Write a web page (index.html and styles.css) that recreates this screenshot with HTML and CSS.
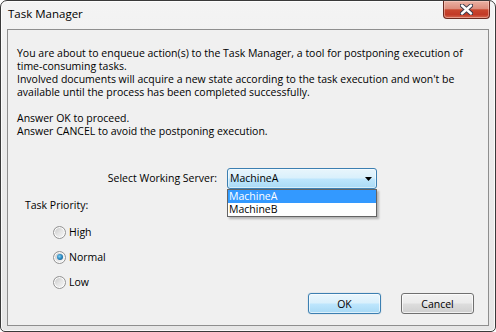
FILE: index.html
```html
<!DOCTYPE html>
<html>
<head>
<meta charset="utf-8">
<title>Task Manager</title>
<link rel="stylesheet" href="styles.css">
</head>
<body>
<div class="window">
  <div class="titlebar">
    <span class="title">Task Manager</span>
    <div class="close">
      <svg width="13" height="11" viewBox="0 0 13 11">
        <path d="M2 1.5 L11 9.5 M11 1.5 L2 9.5" stroke="#3a3a4a" stroke-width="4.4" stroke-linecap="round"/>
        <path d="M2 1.5 L11 9.5 M11 1.5 L2 9.5" stroke="#ffffff" stroke-width="2.4" stroke-linecap="round"/>
      </svg>
    </div>
  </div>
  <div class="panel">
    <div class="message">
      <p>You are about to enqueue action(s) to the Task Manager, a tool for postponing execution of<br>time-consuming tasks.<br>Involved documents will acquire a new state according to the task execution and won't be<br>available until the process has been completed successfully.</p>
      <p>Answer OK to proceed.<br>Answer CANCEL to avoid the postponing execution.</p>
    </div>
    <div class="server-row">
      <span class="server-label">Select Working Server:</span>
      <div class="combo">
        <div class="combo-box">
          <span>MachineA</span>
          <svg class="arrow" width="7" height="4" viewBox="0 0 7 4"><polygon points="0,0 7,0 3.5,4" fill="#000"/></svg>
        </div>
        <ul class="dropdown">
          <li class="selected">MachineA</li>
          <li>MachineB</li>
        </ul>
      </div>
    </div>
    <div class="bottom">
      <div class="priority">
        <div class="priority-label">Task Priority:</div>
        <div class="radio"><span class="dot"></span><span>High</span></div>
        <div class="radio"><span class="dot checked"></span><span>Normal</span></div>
        <div class="radio"><span class="dot"></span><span>Low</span></div>
      </div>
      <div class="buttons">
        <button class="btn default">OK</button>
        <button class="btn">Cancel</button>
      </div>
    </div>
  </div>
</div>
</body>
</html>
```
FILE: styles.css
```css
html, body {
  margin: 0;
  padding: 0;
  background: #ffffff;
}
body {
  font-family: "Open Sans", "Noto Sans", sans-serif;
  color: #000;
}
.window {
  width: 496px;
  height: 332px;
  box-sizing: border-box;
  border: 1px solid #3a3a3a;
  border-radius: 7px 7px 5px 5px;
  background: linear-gradient(#f4f4f4, #ebebeb 40%, #e6e6e6);
  box-shadow: inset 0 0 0 1px rgba(255,255,255,0.8);
  display: flex;
  flex-direction: column;
  overflow: hidden;
}
.titlebar {
  height: 28px;
  display: flex;
  align-items: flex-start;
  flex: none;
}
.title {
  font-size: 11.5px;
  line-height: 14px;
  margin: 6px 0 0 7px;
  color: #000;
}
.close {
  margin-left: auto;
  margin-right: 5px;
  width: 47px;
  height: 18px;
  box-sizing: border-box;
  border: 1px solid #6b2a20;
  border-top: none;
  border-radius: 0 0 4px 4px;
  background: linear-gradient(#eab1a3 0%, #dd8e7d 45%, #c9472f 52%, #c23a26 80%, #d46a52 100%);
  box-shadow: inset 0 0 0 1px rgba(255,220,210,0.45);
  display: flex;
  align-items: center;
  justify-content: center;
}
.close svg { display: block; margin-top: -1px; }
.panel {
  flex: 1;
  margin: 0 6px 5px 6px;
  border: 1px solid #8e8e8e;
  background: #f0f0f0;
  padding: 16.5px 14px 11px 9px;
  display: flex;
  flex-direction: column;
  font-size: 10.5px;
}
.message p {
  margin: 0;
  line-height: 13px;
  white-space: nowrap;
}
.message p + p {
  margin-top: 13px;
}
.server-row {
  display: flex;
  align-items: center;
  margin-top: 30.5px;
}
.server-label {
  width: 200px;
  margin-right: 10px;
  text-align: right;
  line-height: 13px;
}
.combo {
  position: relative;
  width: 150px;
}
.combo-box {
  height: 21px;
  box-sizing: border-box;
  border: 1px solid #3c7fb1;
  border-radius: 3px;
  background: linear-gradient(#e8f5fc 0%, #d9f0fc 48%, #bee6fd 52%, #a9daf5 100%);
  box-shadow: inset 0 0 0 1px rgba(255,255,255,0.5);
  display: flex;
  align-items: center;
  justify-content: space-between;
  padding: 0 4px 0 2px;
  line-height: 13px;
}
.arrow { display: block; }
.dropdown {
  position: absolute;
  top: 100%;
  left: 0;
  width: 150px;
  box-sizing: border-box;
  margin: 0;
  padding: 0;
  list-style: none;
  background: #fff;
  border: 1px solid #646464;
  box-shadow: 2px 2px 2px rgba(0,0,0,0.25);
}
.dropdown li {
  height: 13px;
  line-height: 13px;
  padding-left: 1px;
}
.dropdown li.selected {
  background: #3399ff;
  color: #fff;
}
.bottom {
  flex: 1;
  display: flex;
  justify-content: space-between;
}
.priority {
  margin-top: 9.5px;
  margin-left: 8px;
}
.priority-label {
  line-height: 13px;
  margin-bottom: 8px;
}
.radio {
  height: 25px;
  display: flex;
  align-items: center;
  margin-left: 28px;
}
.dot {
  width: 13px;
  height: 13px;
  box-sizing: border-box;
  border-radius: 50%;
  border: 1px solid #939393;
  background: linear-gradient(135deg, #c4c4c4 0%, #e4e4e4 50%, #f8f8f8 100%);
  box-shadow: inset 0 0 0 1px #fdfdfd;
  margin-right: 3px;
  position: relative;
}
.dot.checked::after {
  content: "";
  position: absolute;
  left: 2.5px;
  top: 2.5px;
  width: 6px;
  height: 6px;
  border-radius: 50%;
  background: radial-gradient(circle at 40% 40%, #7fd0f5 0%, #2a86bd 50%, #0e4a78 100%);
}
.buttons {
  align-self: flex-end;
  display: flex;
  gap: 20px;
}
.btn {
  width: 73px;
  height: 21px;
  box-sizing: border-box;
  border: 1px solid #707070;
  border-radius: 3px;
  font-family: "Open Sans", "Noto Sans", sans-serif;
  font-size: 10.5px;
  color: #000;
  padding: 0;
  background: linear-gradient(#f2f2f2 0%, #ebebeb 48%, #dddddd 52%, #cfcfcf 100%);
  box-shadow: inset 0 0 0 1px rgba(255,255,255,0.7);
}
.btn.default {
  border-color: #3c7fb1;
  background: linear-gradient(#eaf6fd 0%, #d9f0fc 48%, #bee6fd 52%, #a7d9f5 100%);
  box-shadow: inset 0 0 0 1px rgba(255,255,255,0.6), 0 0 1px rgba(60,127,177,0.6);
}
```
